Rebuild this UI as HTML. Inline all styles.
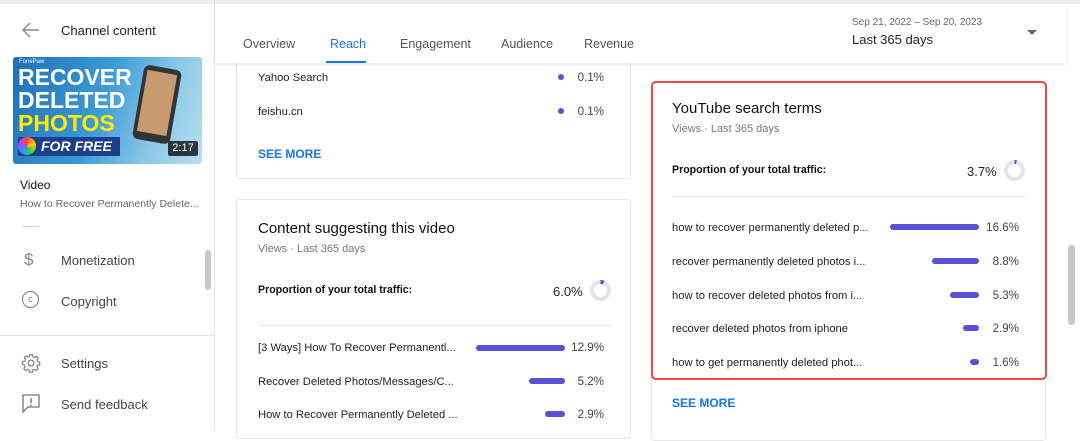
<!DOCTYPE html>
<html><head><style>
*{box-sizing:border-box;margin:0;padding:0}
body{width:1080px;height:430px;overflow:hidden;background:#fff;font-family:"Liberation Sans",Arial,sans-serif;position:relative;color:#0d0d0d}
.abs{position:absolute}
.t{position:absolute;white-space:nowrap}
.card{position:absolute;border:1px solid #e6e6e6;border-radius:4px;background:#fff}
.bar{position:absolute;height:6px;border-radius:3px;background:#5a50d6}
.lbl{font-size:11.2px;color:#222;margin-top:1px}
.pct{font-size:11.6px;color:#444;text-align:right;width:40px}
.nav{font-size:13px;color:#444}
.prop{font-size:10.6px;font-weight:bold;color:#111}
</style></head><body>
<div class="abs" style="left:0;top:0;width:1080px;height:4px;background:#eee"></div>
<div class="abs" style="left:214px;top:0;width:1px;height:430px;background:#e5e5e5"></div>
<svg class="abs" style="left:22px;top:22px" width="18" height="16" viewBox="0 0 18 16"><path d="M17 8H2M8 1L1 8l7 7" fill="none" stroke="#888" stroke-width="1.4"/></svg>
<div class="t" style="left:61px;top:23px;font-size:13px;color:#222">Channel content</div>
<div class="abs" style="left:13px;top:57px;width:189px;height:107px;border-radius:3px;background:linear-gradient(110deg,#1f6fb5 0%,#3a9ad6 45%,#8cc9e6 75%,#b8dff0 100%);overflow:hidden">
<div class="t" style="left:6px;top:2px;font-size:6px;color:#fff">FonePaw</div>
<div class="t" style="left:5px;top:9px;font:900 23px/23px 'Liberation Sans';color:#fff">RECOVER</div>
<div class="t" style="left:5px;top:32px;font:900 23px/23px 'Liberation Sans';color:#fff">DELETED</div>
<div class="t" style="left:5px;top:55px;font:900 23px/23px 'Liberation Sans';color:#ffec00">PHOTOS</div>
<div class="abs" style="left:5px;top:80px;width:102px;height:19px;background:#1c3f8a"></div>
<div class="abs" style="left:5px;top:80px;width:18px;height:18px;border-radius:50%;background:conic-gradient(#f44,#fc0,#4c4,#29f,#a4f,#f44)"></div>
<div class="t" style="left:28px;top:81px;font:italic 900 14px 'Liberation Sans';color:#fff">FOR FREE</div>
<div class="abs" style="left:125px;top:10px;width:38px;height:75px;border-radius:6px;background:#333;transform:rotate(10deg)"></div>
<div class="abs" style="left:129px;top:15px;width:30px;height:62px;background:#c89a70;transform:rotate(10deg)"></div>
<div class="abs" style="left:155px;top:84px;width:30px;height:15px;background:rgba(0,0,0,.75);border-radius:2px;color:#fff;font-size:11px;text-align:center;line-height:15px">2:17</div>
</div>
<div class="t" style="left:20px;top:178px;font-size:12px;color:#111">Video</div>
<div class="t" style="left:20px;top:198px;font-size:10.5px;color:#666">How to Recover Permanently Delete...</div>
<div class="abs" style="left:22px;top:226px;width:17px;height:1px;background:#ccc"></div>
<div class="t" style="left:24px;top:250px;font-size:17px;color:#888">$</div>
<div class="t nav" style="left:61px;top:253px">Monetization</div>
<div class="abs" style="left:22px;top:291px;width:17px;height:17px;border:1.3px solid #777;border-radius:50%;font-size:9px;text-align:center;line-height:15px;color:#777">c</div>
<div class="t nav" style="left:61px;top:294px">Copyright</div>
<div class="abs" style="left:205px;top:250px;width:6px;height:40px;border-radius:3px;background:#c8c8c8"></div>
<div class="abs" style="left:0;top:335px;width:214px;height:1px;background:#e5e5e5"></div>
<svg class="abs" style="left:21px;top:353px" width="20" height="20" viewBox="0 0 24 24"><path fill="none" stroke="#777" stroke-width="1.3" d="M12 8.5a3.5 3.5 0 1 0 0 7 3.5 3.5 0 0 0 0-7zM10.3 2h3.4l.5 2.6 1.8.8 2.2-1.5 2.4 2.4-1.5 2.2.8 1.8 2.6.5v3.4l-2.6.5-.8 1.8 1.5 2.2-2.4 2.4-2.2-1.5-1.8.8-.5 2.6h-3.4l-.5-2.6-1.8-.8-2.2 1.5-2.4-2.4 1.5-2.2-.8-1.8L2 13.7v-3.4l2.6-.5.8-1.8-1.5-2.2 2.4-2.4 2.200 1.5 1.8-.8z"/></svg>
<div class="t nav" style="left:61px;top:356px">Settings</div>
<svg class="abs" style="left:22px;top:394px" width="18" height="20" viewBox="0 0 18 20"><path fill="none" stroke="#777" stroke-width="1.3" d="M1 1h16v12H6l-5 5z"/><path d="M9 4v5M9 10.5v1.5" stroke="#777" stroke-width="1.5"/></svg>
<div class="t nav" style="left:61px;top:397px">Send feedback</div>
<div class="abs" style="left:215px;top:4px;width:851px;height:59px;background:#fff;box-shadow:0 2px 3px rgba(0,0,0,.08);z-index:2">
<div class="t" style="left:28px;top:33px;font-size:12.5px;color:#555">Overview</div>
<div class="t" style="left:115px;top:33px;font-size:12.5px;color:#1a73e8">Reach</div>
<div class="abs" style="left:111px;top:57px;width:40px;height:2px;background:#1a73e8"></div>
<div class="t" style="left:185px;top:33px;font-size:12.5px;color:#555">Engagement</div>
<div class="t" style="left:286px;top:33px;font-size:12.5px;color:#555">Audience</div>
<div class="t" style="left:369px;top:33px;font-size:12.5px;color:#555">Revenue</div>
<div class="t" style="left:637px;top:13px;font-size:10px;color:#666">Sep 21, 2022 – Sep 20, 2023</div>
<div class="t" style="left:637px;top:28px;font-size:13px;color:#222">Last 365 days</div>
<div class="abs" style="left:812px;top:26px;width:0;height:0;border-left:5px solid transparent;border-right:5px solid transparent;border-top:5px solid #666"></div>
</div>
<div class="card" style="left:236px;top:40px;width:395px;height:139px">
<div class="t lbl" style="left:21px;top:30px">Yahoo Search</div>
<div class="abs" style="left:321px;top:33px;width:6px;height:6px;border-radius:50%;background:#5a50d6"></div>
<div class="t pct" style="left:327px;top:30px">0.1%</div>
<div class="t lbl" style="left:21px;top:64px">feishu.cn</div>
<div class="abs" style="left:321px;top:67px;width:6px;height:6px;border-radius:50%;background:#5a50d6"></div>
<div class="t pct" style="left:327px;top:64px">0.1%</div>
<div class="t" style="left:21px;top:106px;font-size:12px;font-weight:bold;color:#1a73e8">SEE MORE</div>
</div>
<div class="card" style="left:236px;top:199px;width:395px;height:240px">
<div class="t" style="left:21px;top:20px;font-size:15px;color:#111">Content suggesting this video</div>
<div class="t" style="left:21px;top:43px;font-size:11px;color:#777">Views · Last 365 days</div>
<div class="t prop" style="left:21px;top:84px">Proportion of your total traffic:</div>
<div class="t" style="left:316px;top:84px;font-size:13px;color:#222">6.0%</div>
<div class="abs" style="left:353px;top:80px;width:21px;height:21px;border-radius:50%;background:conic-gradient(#5a50d6 0 22deg,#e4e4e4 22deg)"></div>
<div class="abs" style="left:357px;top:84px;width:13px;height:13px;border-radius:50%;background:#fff"></div>
<div class="abs" style="left:21px;top:125px;width:354px;height:1px;background:#e8e8e8"></div>
<div class="t lbl" style="left:21px;top:141px">[3 Ways] How To Recover Permanentl...</div>
<div class="bar" style="left:239px;top:145px;width:89px"></div>
<div class="t pct" style="left:327px;top:141px">12.9%</div>
<div class="t lbl" style="left:21px;top:175px">Recover Deleted Photos/Messages/C...</div>
<div class="bar" style="left:292px;top:178px;width:36px"></div>
<div class="t pct" style="left:327px;top:175px">5.2%</div>
<div class="t lbl" style="left:21px;top:208px">How to Recover Permanently Deleted ...</div>
<div class="bar" style="left:308px;top:211px;width:20px"></div>
<div class="t pct" style="left:327px;top:208px">2.9%</div>
</div>
<div class="card" style="left:651px;top:81px;width:395px;height:360px"></div>
<div class="abs" style="left:651px;top:81px;width:396px;height:299px;border:2.5px solid #f04848;border-radius:5px">
<div class="t" style="left:19px;top:17px;font-size:15px;color:#111">YouTube search terms</div>
<div class="t" style="left:19px;top:40px;font-size:11px;color:#777">Views · Last 365 days</div>
<div class="t prop" style="left:19px;top:81px">Proportion of your total traffic:</div>
<div class="t" style="left:314px;top:81px;font-size:13px;color:#222">3.7%</div>
<div class="abs" style="left:351px;top:77px;width:21px;height:21px;border-radius:50%;background:conic-gradient(#5a50d6 0 13deg,#e4e4e4 13deg)"></div>
<div class="abs" style="left:355px;top:81px;width:13px;height:13px;border-radius:50%;background:#fff"></div>
<div class="abs" style="left:19px;top:113px;width:354px;height:1px;background:#e8e8e8"></div>
<div class="t lbl" style="left:19px;top:138px">how to recover permanently deleted p...</div>
<div class="bar" style="left:237px;top:141px;width:89px"></div>
<div class="t pct" style="left:326px;top:138px">16.6%</div>
<div class="t lbl" style="left:19px;top:172px">recover permanently deleted photos i...</div>
<div class="bar" style="left:279px;top:175px;width:47px"></div>
<div class="t pct" style="left:326px;top:172px">8.8%</div>
<div class="t lbl" style="left:19px;top:206px">how to recover deleted photos from i...</div>
<div class="bar" style="left:297px;top:209px;width:29px"></div>
<div class="t pct" style="left:326px;top:206px">5.3%</div>
<div class="t lbl" style="left:19px;top:239px">recover deleted photos from iphone</div>
<div class="bar" style="left:310px;top:242px;width:16px"></div>
<div class="t pct" style="left:326px;top:239px">2.9%</div>
<div class="t lbl" style="left:19px;top:273px">how to get permanently deleted phot...</div>
<div class="bar" style="left:317px;top:276px;width:9px"></div>
<div class="t pct" style="left:326px;top:273px">1.6%</div>
</div>
<div class="t" style="left:672px;top:396px;font-size:12px;font-weight:bold;color:#1a73e8">SEE MORE</div>
<div class="abs" style="left:1068px;top:245px;width:7px;height:80px;border-radius:3px;background:#c8c8c8"></div>
</body></html>
